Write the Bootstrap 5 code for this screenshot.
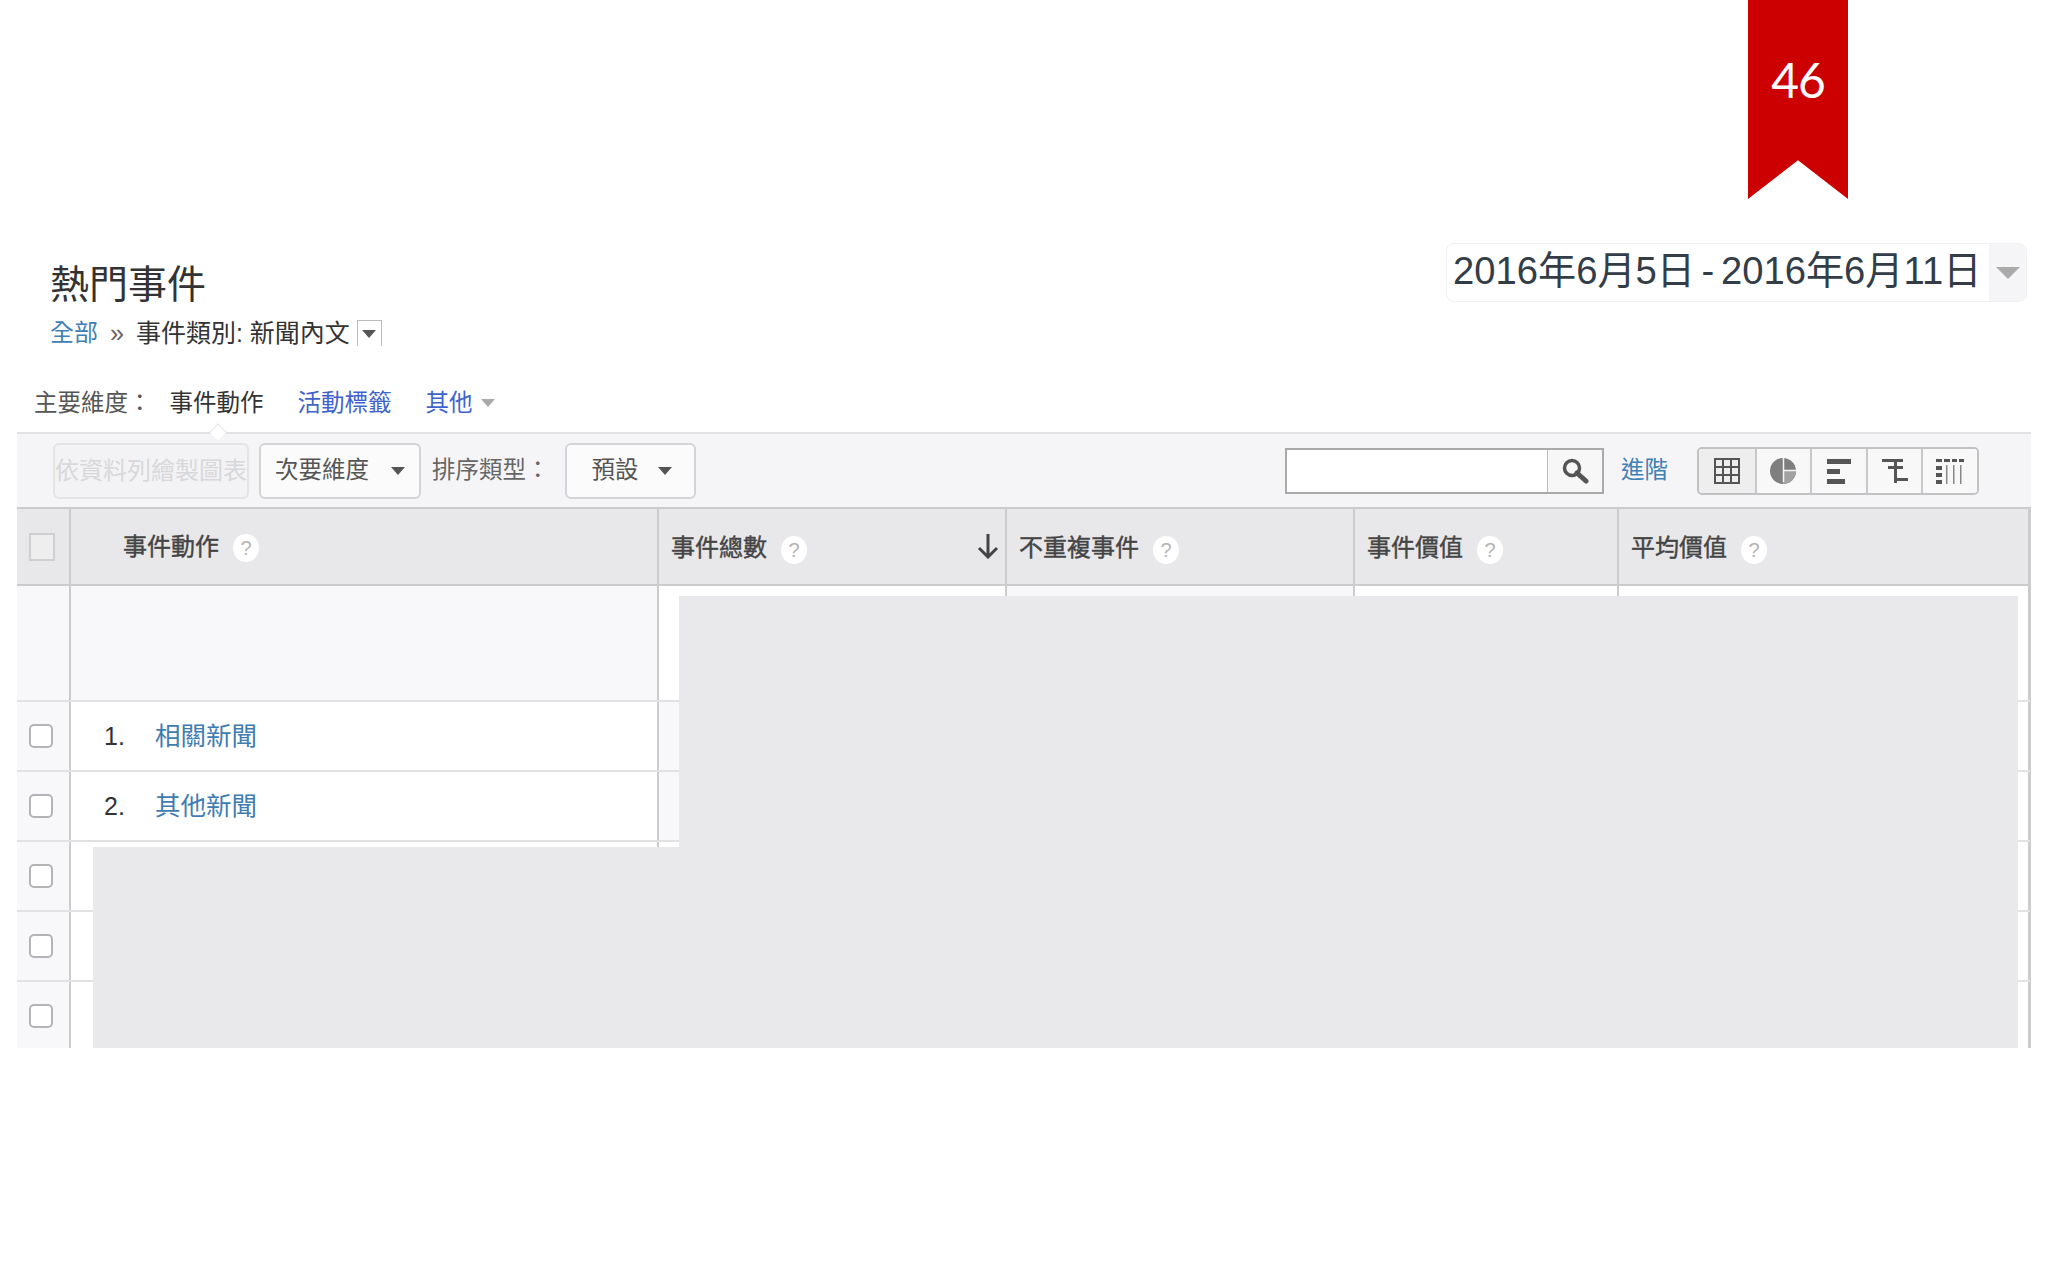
<!DOCTYPE html>
<html lang="zh-Hant">
<head>
<meta charset="utf-8">
<title>熱門事件</title>
<link href="https://cdn.jsdelivr.net/npm/bootstrap@5.3.0/dist/css/bootstrap.min.css" rel="stylesheet">
<style>
body{background:#fff;font-family:"Liberation Sans","Noto Sans CJK TC",sans-serif;color:#333;font-size:23.5px}
.ga-page{width:2048px;height:1280px;overflow:hidden}
.ga-ribbon-row{height:199px;padding-right:200px}
.ga-ribbon{width:100px;height:199px;background:#c00;color:#fff;font-family:Lato,sans-serif;font-weight:400;font-size:48px;letter-spacing:-1px;line-height:1;padding-top:56px;clip-path:polygon(0 0,100% 0,100% 100%,50% 80.5%,0 100%)}
.ga-head{padding:44px 21px 0 50px}
.ga-title{font-size:39px;line-height:40px;font-weight:400;margin:22px 0 0;color:#333;font-family:"Liberation Sans","Noto Sans CJK TC",sans-serif}
.ga-crumb{font-size:24px;line-height:28px;margin-top:14px;color:#333}
.ga-crumb a{color:#3f80b5;text-decoration:none}
.ga-sep{margin:0 12px;color:#666;font-size:25px}
.ga-crumb-text{font-size:25px}
.ga-mini{width:25px;height:26px;border:1px solid #bbb;border-bottom:0;margin-left:7px}
.ga-tri{width:0;height:0;border-left:7px solid transparent;border-right:7px solid transparent;border-top:8px solid #555;display:inline-block}
.ga-tri-light{border-top-color:#aaa}
.ga-date{width:581px;height:59px;border:1px solid #f0f0f2;border-radius:8px;overflow:hidden;color:#333d48;font-size:38.200px;word-spacing:-4px;line-height:1}
.ga-date-text{padding:0 0 3px 6px;white-space:nowrap}
.ga-date-arrow{width:37px;background:#f5f5f7}
.ga-date-arrow .ga-tri{border-left-width:12px;border-right-width:12px;border-top-width:12px}
.ga-dims{padding-left:34px;margin-top:42px;height:28px;margin-bottom:15px;line-height:28px;color:#555}
.ga-dims a{color:#3f63cc;text-decoration:none}
.ga-dims .ga-cur{margin:0 34px 0 18px;color:#333}
.ga-dims .ga-more{margin-left:34px}
.ga-toolbar{margin-left:17px;width:2014px;height:75px;background:#f5f5f7;border-top:2px solid #e2e2e4;padding-left:36px;padding-right:52px}
.ga-notch{left:193px;top:-10px;width:16px;height:16px;background:#fff;border-left:1px solid #ddd;border-top:1px solid #ddd;transform:rotate(45deg) scale(.75)}
.ga-btn{height:56px;font-size:23.5px;line-height:1;background:#fbfbfc;border:2px solid #d4d4d6;border-radius:6px;color:#555;padding:0}
.ga-btn:disabled{opacity:1;background:#f3f3f5;border-color:#e4e4e6;color:#d8d8da;width:196px;margin-right:10px;white-space:nowrap;overflow:hidden;font-size:24px}
.ga-btn-sec{width:162px;padding:0 14px;margin-right:11px}
.ga-btn-def{width:131px;padding:0 22px 0 25px;margin-left:15px}
.ga-sort{color:#666}
.ga-search{width:319px;height:46px;border:2px solid #aaa;background:#fff}
.ga-search input{border:0;border-radius:0;background:#fff;padding:0;box-shadow:none;height:100%}
.ga-search-btn{width:55px;border-left:1px solid #bbb;background:#f7f7f8}
.ga-adv{color:#3f80b5;text-decoration:none;margin:0 29px 0 17px;font-size:23.5px}
.ga-views{height:48px;border:2px solid #c2c2c4;border-radius:5px;overflow:hidden;width:282px}
.ga-view{width:56px;border-left:2px solid #c8c8ca;background:#f8f8f9}
.ga-view:first-child{border-left:0;background:#eeeeef}
.ga-tablewrap{margin-left:17px;width:2014px;height:541px;overflow:hidden;border-right:1px solid #ccc}
.ga-table{table-layout:fixed;width:2013px;margin:0;border-collapse:collapse;--bs-table-bg:transparent;--bs-table-border-color:#e2e2e4}
.ga-table th,.ga-table td{padding:0;border-bottom:2px solid #e2e2e4;border-right:2px solid #ccc;vertical-align:middle;font-size:24px}
.ga-table thead th{height:77px;background:#e8e8ea;border-top:2px solid #ccc;border-bottom:2px solid #ccc;font-weight:400;color:#444;-webkit-text-stroke:.4px #444;padding:3px 0 0 12px}
.ga-table thead th:first-child{padding:0 0 0 12px}
.ga-table thead th.ga-th-main{padding:0 0 0 52px}
.ga-table .ga-chk{background:#f8f8fa;padding-left:12px}
.ga-table tbody tr{height:70px}
.ga-table .ga-first-row{height:116px}
.ga-table .ga-soft{background:#f8f8fa}
.ga-box{width:24px;height:24px;border:2px solid #b4b4b6;border-radius:5px;background:#fff;margin:0;display:block;appearance:none}
.ga-box-head{width:26px;height:28px;border:2px solid #cfcfd1;border-radius:0;background:#eeeeef}
.ga-num{display:inline-block;padding-left:33px;width:52px;margin-right:32px;box-sizing:border-box;font-size:25px;color:#333}
.ga-table td a{color:#3f7cb2;text-decoration:none;font-size:25.500px}
.ga-q{display:inline-flex;width:26px;height:28px;border-radius:50%;background:#fff;color:#b4b4b4;font-size:20px;margin-left:14px;align-items:center;justify-content:center;-webkit-text-stroke:0;vertical-align:middle}
.ga-down{right:6px;top:24px}
.ga-cover{background:#e9e9eb}
.ga-cover-a{left:662px;top:89px;width:1339px;height:252px}
.ga-cover-b{left:76px;top:340px;width:1925px;height:201px}
</style>
</head>
<body>
<div class="ga-page">
  <div class="ga-ribbon-row d-flex justify-content-end">
    <div class="ga-ribbon text-center">46</div>
  </div>
  <div class="ga-head d-flex justify-content-between align-items-start">
    <div>
      <h1 class="ga-title">熱門事件</h1>
      <div class="ga-crumb d-flex align-items-center">
        <a href="#">全部</a><span class="ga-sep">»</span><span class="ga-crumb-text">事件類別: 新聞內文</span>
        <span class="ga-mini d-inline-flex align-items-center justify-content-center"><span class="ga-tri"></span></span>
      </div>
    </div>
    <div class="ga-date d-flex align-items-stretch">
      <div class="ga-date-text flex-grow-1 d-flex align-items-center">2016年6月5日 - 2016年6月11日</div>
      <div class="ga-date-arrow flex-shrink-0 d-flex align-items-center justify-content-center"><span class="ga-tri ga-tri-light"></span></div>
    </div>
  </div>
  <div class="ga-dims d-flex align-items-center">
    <span>主要維度：</span><span class="ga-cur">事件動作</span><a href="#">活動標籤</a><a href="#" class="ga-more">其他</a><span class="ga-tri ga-tri-light ms-2"></span>
  </div>
  <div class="ga-toolbar d-flex align-items-center position-relative">
    <span class="ga-notch position-absolute"></span>
    <button class="btn ga-btn" disabled>依資料列繪製圖表</button>
    <button class="btn ga-btn ga-btn-sec d-flex align-items-center justify-content-between"><span>次要維度</span><span class="ga-tri"></span></button>
    <span class="ga-sort text-nowrap">排序類型：</span>
    <button class="btn ga-btn ga-btn-def d-flex align-items-center justify-content-between"><span>預設</span><span class="ga-tri"></span></button>
    <div class="ga-search d-flex ms-auto">
      <input class="form-control flex-grow-1" type="text" aria-label="搜尋">
      <div class="ga-search-btn flex-shrink-0 d-flex align-items-center justify-content-center">
        <svg width="28" height="26" viewBox="0 0 28 26"><circle cx="11" cy="10" r="7.5" fill="none" stroke="#555" stroke-width="3.500"/><path d="M16 15l9 8" stroke="#555" stroke-width="5" stroke-linecap="round"/></svg>
      </div>
    </div>
    <a href="#" class="ga-adv">進階</a>
    <div class="ga-views d-flex">
      <div class="ga-view d-flex align-items-center justify-content-center">
        <svg width="26" height="26" viewBox="0 0 26 26" fill="none" stroke="#555" stroke-width="2"><rect x="1" y="1" width="24" height="24"/><path d="M9 1v24M17 1v24M1 9h24M1 17h24"/></svg>
      </div>
      <div class="ga-view d-flex align-items-center justify-content-center">
        <svg width="28" height="28" viewBox="0 0 28 28"><circle cx="14" cy="14" r="13" fill="#7f7f7f"/><path d="M14 14h13a13 13 0 0 1-13 13z" fill="#a2a2a2"/><path d="M14.500 1v24M14.500 13.500H27" stroke="#f4f4f5" stroke-width="1.500" fill="none"/></svg>
      </div>
      <div class="ga-view d-flex align-items-center justify-content-center">
        <svg width="26" height="26" viewBox="0 0 26 26" fill="#555"><rect x="1" y="1" width="24" height="5"/><rect x="1" y="11" width="13" height="5"/><rect x="1" y="21" width="18" height="5"/></svg>
      </div>
      <div class="ga-view d-flex align-items-center justify-content-center">
        <svg width="26" height="26" viewBox="0 0 26 26" fill="#555"><rect x="0" y="1" width="21" height="3"/><rect x="6" y="8" width="15" height="3"/><rect x="12" y="1" width="3" height="24"/><rect x="12" y="20" width="14" height="3"/></svg>
      </div>
      <div class="ga-view d-flex align-items-center justify-content-center">
        <svg width="30" height="26" viewBox="0 0 30 26" fill="#555"><rect x="1" y="1" width="6" height="3"/><rect x="9" y="1" width="6" height="3"/><rect x="17" y="1" width="5" height="3"/><rect x="24" y="1" width="5" height="3"/><rect x="1" y="8" width="6" height="4"/><rect x="1" y="15" width="6" height="4"/><rect x="1" y="22" width="6" height="4"/><rect x="11" y="7" width="1.500" height="19" fill="#888"/><rect x="18" y="7" width="1.500" height="19" fill="#888"/><rect x="25" y="7" width="1.500" height="19" fill="#888"/></svg>
      </div>
    </div>
  </div>
  <div class="ga-tablewrap position-relative">
    <table class="table ga-table">
      <colgroup><col style="width:53px"><col style="width:588px"><col style="width:348px"><col style="width:348px"><col style="width:264px"><col></colgroup>
      <thead>
        <tr>
          <th><input class="ga-box ga-box-head" type="checkbox" aria-label="全選" disabled></th>
          <th class="ga-th-main">事件動作<span class="ga-q">?</span></th>
          <th class="position-relative">事件總數<span class="ga-q">?</span>
            <svg class="ga-down position-absolute" width="22" height="26" viewBox="0 0 22 26" fill="none" stroke="#444" stroke-width="3"><path d="M11 1v23M2 15l9 9 9-9"/></svg>
          </th>
          <th>不重複事件<span class="ga-q">?</span></th>
          <th>事件價值<span class="ga-q">?</span></th>
          <th>平均價值<span class="ga-q">?</span></th>
        </tr>
      </thead>
      <tbody>
        <tr class="ga-first-row"><td class="ga-chk"></td><td class="ga-soft"></td><td></td><td class="ga-soft"></td><td></td><td></td></tr>
        <tr><td class="ga-chk"><input class="ga-box" type="checkbox" aria-label="選取"></td><td><span class="ga-num">1.</span><a href="#">相關新聞</a></td><td class="ga-soft"></td><td></td><td></td><td></td></tr>
        <tr><td class="ga-chk"><input class="ga-box" type="checkbox" aria-label="選取"></td><td><span class="ga-num">2.</span><a href="#">其他新聞</a></td><td class="ga-soft"></td><td></td><td></td><td></td></tr>
        <tr><td class="ga-chk"><input class="ga-box" type="checkbox" aria-label="選取"></td><td></td><td></td><td></td><td></td><td></td></tr>
        <tr><td class="ga-chk"><input class="ga-box" type="checkbox" aria-label="選取"></td><td></td><td></td><td></td><td></td><td></td></tr>
        <tr><td class="ga-chk"><input class="ga-box" type="checkbox" aria-label="選取"></td><td></td><td></td><td></td><td></td><td></td></tr>
      </tbody>
    </table>
    <div class="ga-cover ga-cover-a position-absolute"></div>
    <div class="ga-cover ga-cover-b position-absolute"></div>
  </div>
</div>
<script src="https://cdn.jsdelivr.net/npm/bootstrap@5.3.0/dist/js/bootstrap.bundle.min.js"></script>
</body>
</html>
